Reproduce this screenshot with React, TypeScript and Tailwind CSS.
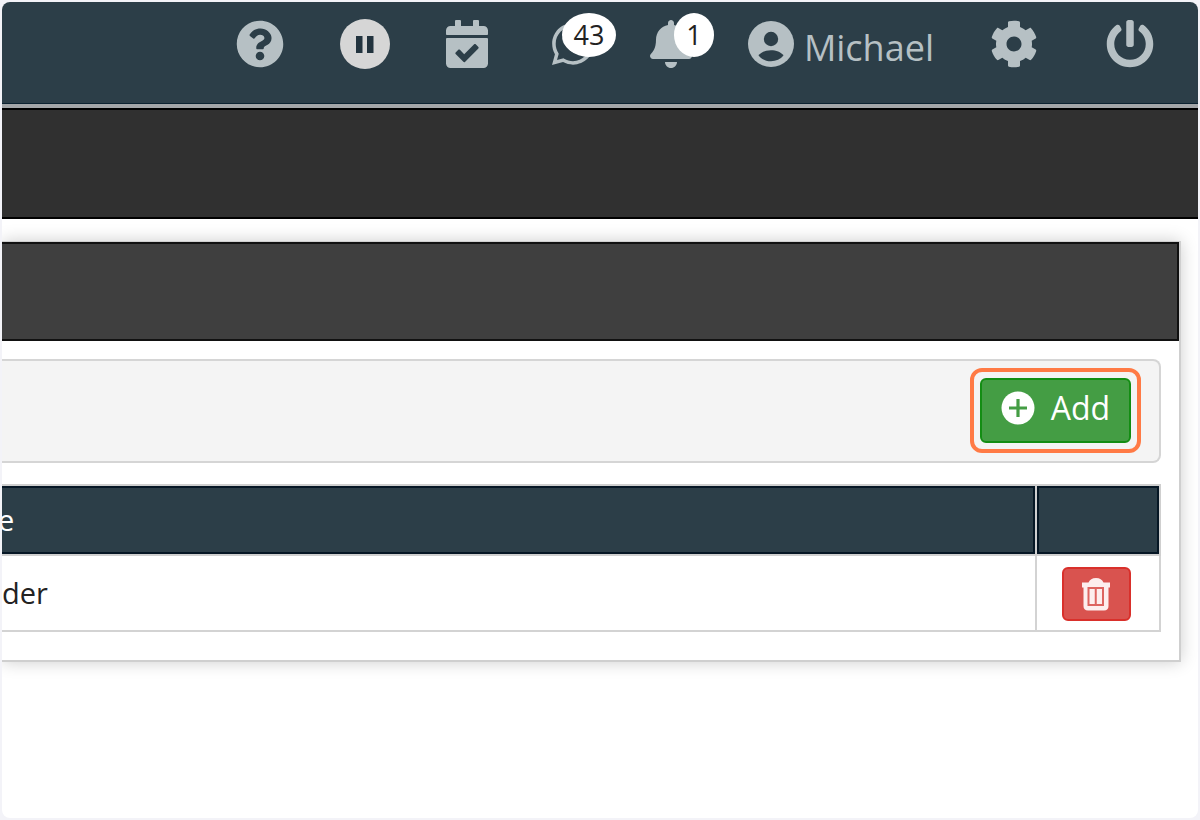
import type { ReactNode } from 'react';
import { FaBell, FaCalendarCheck, FaCog, FaPowerOff, FaQuestionCircle, FaWhatsapp } from 'react-icons/fa';

function PauseIcon() {
  return (
    <svg viewBox="0 0 50 50" className="size-[50px]" aria-hidden="true">
      <circle cx="25" cy="25" r="25" fill="#d6d6d6" />
      <path d="M16 17h6.500v17H16zM27 17h6.500v17H27z" fill="#22333e" />
    </svg>
  );
}

function AccountIcon() {
  return (
    <svg viewBox="0 0 46 46" className="size-[46px]" aria-hidden="true">
      <circle cx="23" cy="23" r="23" fill="currentColor" />
      <circle cx="23" cy="18" r="7.2" fill="#2c3e48" />
      <path
        d="M10.500 34.500c2.500-3.600 7.500-5.300 12.500-5.300s10 1.700 12.500 5.300c-3 3.700-7.500 5.700-12.500 5.700s-9.500-2-12.500-5.700z"
        fill="#2c3e48"
      />
    </svg>
  );
}

function PlusIcon() {
  return (
    <svg viewBox="0 0 34 34" className="size-[34px]" aria-hidden="true">
      <circle cx="17" cy="17" r="16.500" fill="#ffffff" />
      <path d="M17 8v18M8 17h18" stroke="#449d44" strokeWidth="3.200" />
    </svg>
  );
}

function TrashIcon() {
  return (
    <svg viewBox="0 0 30 34" className="h-[34px] w-[30px]" aria-hidden="true">
      <path
        d="M1 5.500h6.500C9 2.500 11 1 15 1s6 1.500 7.500 4.500H29v5h-1.500V29c0 2.800-1.500 4.500-4.500 4.500H7c-3 0-4.500-1.700-4.500-4.500V10.500H1z"
        fill="#fdeeee"
      />
      <path d="M7.500 11h14.500v17H7.500zM14.750 11v17" fill="none" stroke="#dd6460" strokeWidth="2" />
    </svg>
  );
}

function NavButton({ label, className = '', children }: { label: string; className?: string; children: ReactNode }) {
  return (
    <button type="button" aria-label={label} className={`relative flex h-[50px] items-center ${className}`}>
      {children}
    </button>
  );
}

function TopBar() {
  return (
    <header className="flex h-[102px] items-start justify-end gap-14 border-b border-[#0c2230] bg-[#2c3e48] pt-[17px] pr-11 text-[#b6c0c4]">
      <NavButton label="Help">
        <FaQuestionCircle className="size-12" />
      </NavButton>
      <NavButton label="Pause">
        <PauseIcon />
      </NavButton>
      <NavButton label="Calendar">
        <FaCalendarCheck className="h-12 w-[42px]" />
      </NavButton>
      <NavButton label="Messages" className="ml-2">
        <FaWhatsapp className="h-12 w-[42px]" />
        <span className="absolute -top-1.5 left-2.5 flex h-11 w-[54px] items-center justify-center rounded-[50%] bg-white text-[27px] text-[#222222]">
          43
        </span>
      </NavButton>
      <NavButton label="Notifications">
        <FaBell className="h-12 w-[42px]" />
        <span className="absolute -top-1.5 left-6 flex h-11 w-10 items-center justify-center rounded-[50%] bg-white text-[27px] text-[#222222]">
          1
        </span>
      </NavButton>
      <a href="#account" className="flex h-[50px] items-center gap-2.5">
        <AccountIcon />
        <span className="pt-2 text-[36px] leading-[48px] font-medium">Michael</span>
      </a>
      <NavButton label="Settings">
        <FaCog className="size-12" />
      </NavButton>
      <NavButton label="Log out" className="ml-3">
        <FaPowerOff className="size-12" />
      </NavButton>
    </header>
  );
}

export default function App() {
  return (
    <div className="flex min-h-screen flex-col bg-[#f3f3f8] p-0.5 font-['Open_Sans',sans-serif]">
      <div className="grow overflow-hidden rounded-lg bg-white">
        <TopBar />
        <div className="h-1 bg-[#a3a6a8]" />
        <div className="h-[111px] border-y-2 border-black bg-[#303030]" />

        <main className="pt-[22px] pr-[17px]">
          <section className="border-t border-r-2 border-b-2 border-[#cfcfcf] pb-7 shadow-[0_0_16px_rgba(0,0,0,0.2)]">
            <div className="h-[99px] border-2 border-l-0 border-[#111111] bg-[#3f3f3f]" />

            <div className="pr-[18px]">
              <div className="mt-[18px] flex h-[104px] items-center justify-end rounded-r-lg border-2 border-l-0 border-[#d5d5d5] bg-[#f4f4f4] pr-7 pb-0.5">
                <div className="relative">
                  <button
                    type="button"
                    className="flex h-[65px] w-[151px] items-center justify-center gap-4 rounded-md border-2 border-[#138d13] bg-[#449d44] pb-1 text-[32px] font-medium text-white"
                  >
                    <PlusIcon />
                    Add
                  </button>
                  <div className="pointer-events-none absolute -inset-[10px] rounded-xl border-4 border-[#ff7a45]" />
                </div>
              </div>

              <table className="mt-[21px] w-full border-collapse text-[29px] text-[#222222]">
                <thead>
                  <tr className="h-[70px] bg-[#2c3e48]">
                    <th className="border-2 border-l-0 border-[#cfcfcf] p-0 text-left font-medium text-white -indent-1">
                      <div className="flex h-[68px] items-center border-2 border-l-0 border-[#061725]">e</div>
                    </th>
                    <th aria-label="Actions" className="w-[124px] border-2 border-[#cfcfcf] p-0">
                      <div className="h-[68px] border-2 border-[#061725]" />
                    </th>
                  </tr>
                </thead>
                <tbody>
                  <tr className="h-[76px]">
                    <td className="border-2 border-l-0 border-[#d3d3d3] p-0">der</td>
                    <td className="border-2 border-[#d3d3d3] p-0 pt-0.5 pr-1">
                      <button
                        type="button"
                        aria-label="Delete"
                        className="mx-auto flex h-[54px] w-[69px] items-center justify-center rounded-md border-2 border-[#d9302b] bg-[#d9534f]"
                      >
                        <TrashIcon />
                      </button>
                    </td>
                  </tr>
                </tbody>
              </table>
            </div>
          </section>
        </main>
      </div>
    </div>
  );
}
